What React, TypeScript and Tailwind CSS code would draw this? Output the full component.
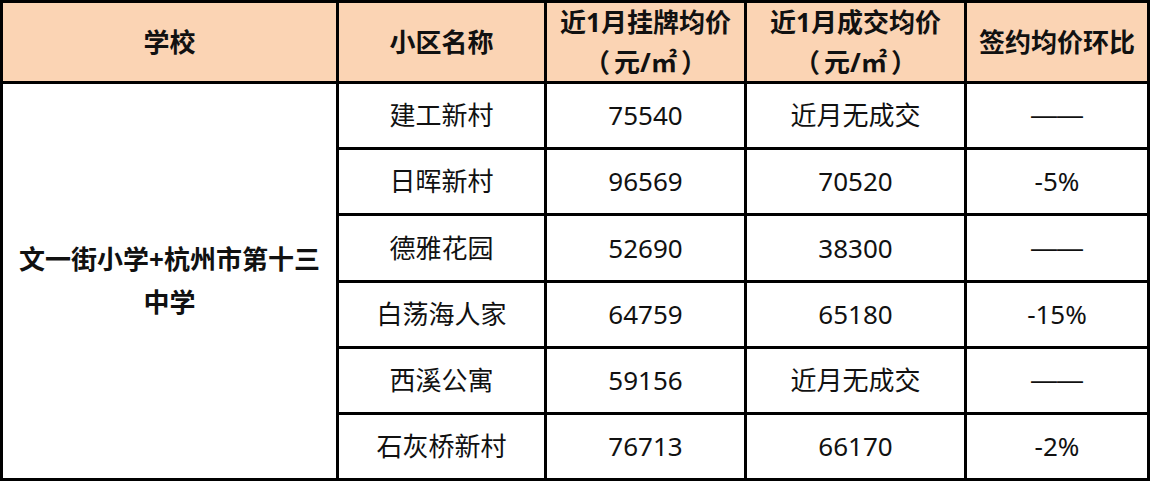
import React from "react";

const rows = [
  ["建工新村", "75540", "近月无成交", "——"],
  ["日晖新村", "96569", "70520", "-5%"],
  ["德雅花园", "52690", "38300", "——"],
  ["白荡海人家", "64759", "65180", "-15%"],
  ["西溪公寓", "59156", "近月无成交", "——"],
  ["石灰桥新村", "76713", "66170", "-2%"],
];

const font = { fontFamily: '"Noto Sans", "Noto Sans CJK SC", sans-serif' };
const dashFont = { fontFamily: '"Liberation Sans", "Noto Sans CJK SC", sans-serif' };

function Unit() {
  return (
    <span>
      （<span className="px-[4px]">元/㎡</span>）
    </span>
  );
}

export default function App() {
  return (
    <div className="w-[1152px] h-[482px] bg-white" style={font}>
      <div className="grid w-fit grid-cols-[333px_205px_197px_217px_180px] grid-rows-[78px_63px_63px_64px_63px_63px_63px] gap-[3px] bg-black p-[3px] text-[26px] text-[#111]">
        <div className="flex items-center justify-center bg-[#fbd4b4] font-bold">学校</div>
        <div className="flex items-center justify-center bg-[#fbd4b4] font-bold">小区名称</div>
        <div className="flex flex-col items-center justify-center bg-[#fbd4b4] font-bold leading-[40px]">
          <span>近1月挂牌均价</span>
          <Unit />
        </div>
        <div className="flex flex-col items-center justify-center bg-[#fbd4b4] font-bold leading-[40px]">
          <span>近1月成交均价</span>
          <Unit />
        </div>
        <div className="flex items-center justify-center bg-[#fbd4b4] font-bold">签约均价环比</div>

        <div className="row-span-6 flex flex-col items-center justify-center bg-white font-bold leading-[43px]">
          <span>文一街小学+杭州市第十三</span>
          <span>中学</span>
        </div>
        {rows.map((r, i) => (
          <React.Fragment key={i}>
            {r.map((c, j) => (
              <div key={j} className="flex items-center justify-center bg-white">
                {c === "——" ? <span style={dashFont}>{c}</span> : c}
              </div>
            ))}
          </React.Fragment>
        ))}
      </div>
    </div>
  );
}
